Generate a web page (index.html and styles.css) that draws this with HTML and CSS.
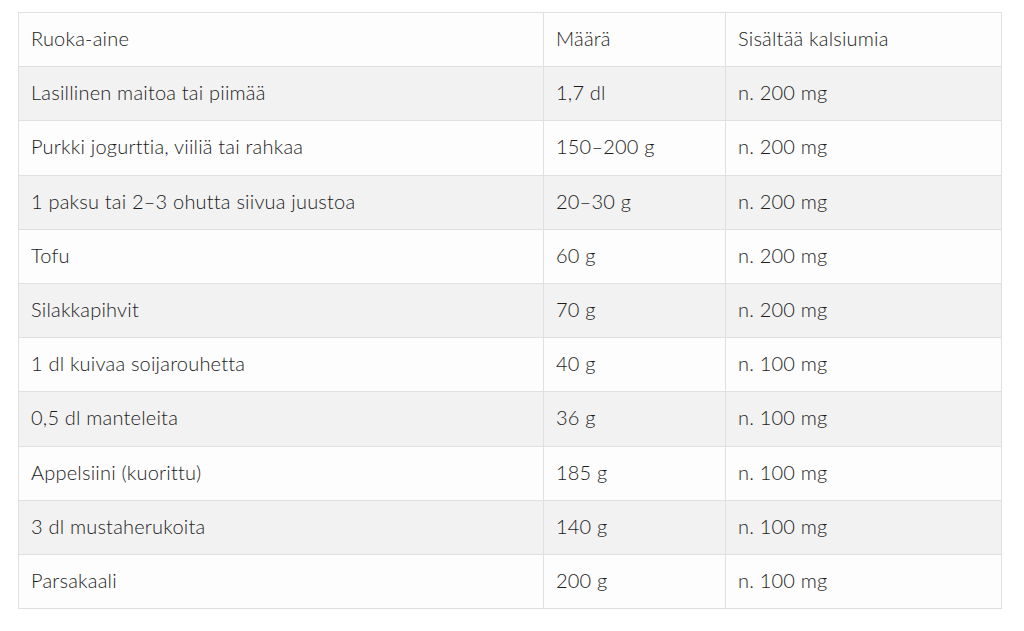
FILE: index.html
```html
<!DOCTYPE html>
<html lang="fi">
<head>
<meta charset="utf-8">
<link rel="stylesheet" href="styles.css">
</head>
<body>
<div class="wrap">
<table class="calc">
  <colgroup><col class="c1"><col class="c2"><col class="c3"></colgroup>
  <tbody>
    <tr><td>Ruoka-aine</td><td>Määrä</td><td>Sisältää kalsiumia</td></tr>
    <tr><td>Lasillinen maitoa tai piimää</td><td>1,7 dl</td><td>n. 200 mg</td></tr>
    <tr><td>Purkki jogurttia, viiliä tai rahkaa</td><td>150–200 g</td><td>n. 200 mg</td></tr>
    <tr><td>1 paksu tai 2–3 ohutta siivua juustoa</td><td>20–30 g</td><td>n. 200 mg</td></tr>
    <tr><td>Tofu</td><td>60 g</td><td>n. 200 mg</td></tr>
    <tr><td>Silakkapihvit</td><td>70 g</td><td>n. 200 mg</td></tr>
    <tr><td>1 dl kuivaa soijarouhetta</td><td>40 g</td><td>n. 100 mg</td></tr>
    <tr><td>0,5 dl manteleita</td><td>36 g</td><td>n. 100 mg</td></tr>
    <tr><td>Appelsiini (kuorittu)</td><td>185 g</td><td>n. 100 mg</td></tr>
    <tr><td>3 dl mustaherukoita</td><td>140 g</td><td>n. 100 mg</td></tr>
    <tr><td>Parsakaali</td><td>200 g</td><td>n. 100 mg</td></tr>
  </tbody>
</table>
</div>
</body>
</html>
```
FILE: styles.css
```css
html, body {
  margin: 0;
  padding: 0;
  background: #ffffff;
}
.wrap {
  padding: 12px 23px 0 18px;
}
.calc {
  width: 983px;
  border-collapse: collapse;
  table-layout: fixed;
  font-family: Lato, "Liberation Sans", sans-serif;
  font-size: 20px;
  font-weight: 300;
  color: #1c1c1c;
  letter-spacing: 0.2px;
}
.c1 { width: 525px; }
.c2 { width: 182px; }
.c3 { width: 276px; }
.calc td {
  border: 1px solid #e0e0e0;
  padding: 0 12px 3px;
  height: 50.2px;
  line-height: 28px;
  background: #fdfdfd;
  vertical-align: middle;
}
.calc tr:nth-child(even) td {
  background: #f2f2f2;
}
```
